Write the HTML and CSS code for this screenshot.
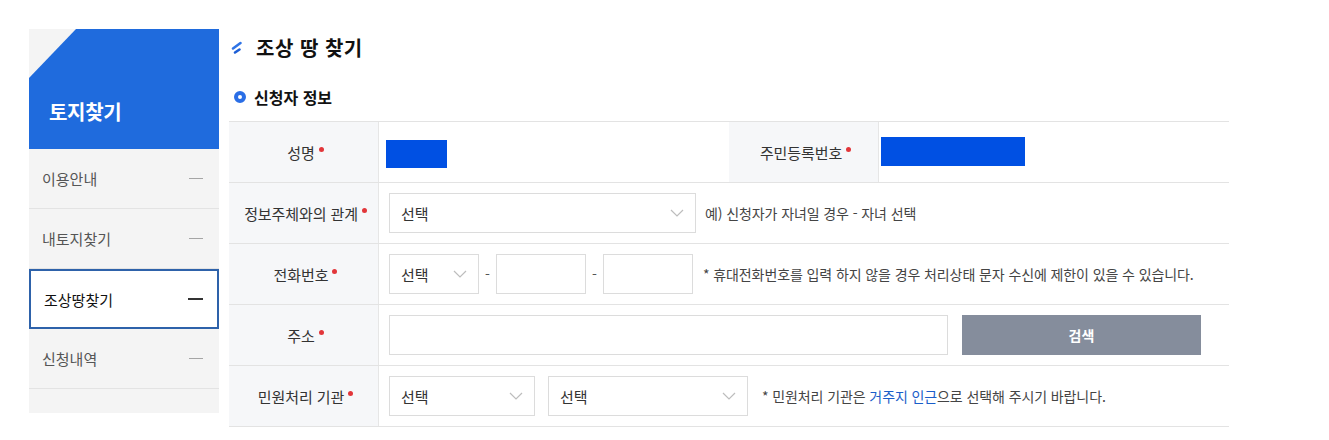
FILE: index.html
```html
<!DOCTYPE html>
<html lang="ko">
<head>
<meta charset="utf-8">
<title>조상 땅 찾기</title>
<link rel="stylesheet" href="styles.css">
</head>
<body>
<div class="page">
  <aside class="side">
    <div class="side-head">토지찾기</div>
    <ul class="side-menu">
      <li class="side-item"><span>이용안내</span><i class="dash"></i></li>
      <li class="side-item"><span>내토지찾기</span><i class="dash"></i></li>
      <li class="side-item active"><span>조상땅찾기</span><i class="dash"></i></li>
      <li class="side-item"><span>신청내역</span><i class="dash"></i></li>
    </ul>
  </aside>
  <main class="main">
    <h1 class="title">
      <svg class="title-icon" width="12" height="16" viewBox="0 0 12 16"><path d="M2 8.5 L9.5 3" stroke="#2f74e6" stroke-width="2.6" stroke-linecap="round"/><path d="M4 12.5 L8.5 9.5" stroke="#1d5fd6" stroke-width="2.6" stroke-linecap="round"/></svg>
      조상 땅 찾기
    </h1>
    <h2 class="subtitle"><span class="ring"></span>신청자 정보</h2>
    <div class="form">
      <div class="row row-split">
        <div class="label">성명<span class="req"></span></div>
        <div class="value"><span class="mask mask-name"></span></div>
        <div class="label">주민등록번호<span class="req"></span></div>
        <div class="value"><span class="mask mask-id"></span></div>
      </div>
      <div class="row">
        <div class="label">정보주체와의 관계<span class="req"></span></div>
        <div class="value">
          <div class="select w308"><span>선택</span><svg class="chev" width="14" height="8" viewBox="0 0 14 8"><path d="M1 1 L7 7 L13 1" fill="none" stroke="#bdbdbd" stroke-width="1.2"/></svg></div>
          <p class="note">예) 신청자가 자녀일 경우 - 자녀 선택</p>
        </div>
      </div>
      <div class="row">
        <div class="label">전화번호<span class="req"></span></div>
        <div class="value">
          <div class="select w90"><span>선택</span><svg class="chev" width="14" height="8" viewBox="0 0 14 8"><path d="M1 1 L7 7 L13 1" fill="none" stroke="#bdbdbd" stroke-width="1.2"/></svg></div>
          <span class="hyph">-</span>
          <div class="input w90"></div>
          <span class="hyph">-</span>
          <div class="input w90"></div>
          <p class="note">* 휴대전화번호를 입력 하지 않을 경우 처리상태 문자 수신에 제한이 있을 수 있습니다.</p>
        </div>
      </div>
      <div class="row">
        <div class="label">주소<span class="req"></span></div>
        <div class="value">
          <div class="input w560"></div>
          <button class="btn" type="button">검색</button>
        </div>
      </div>
      <div class="row">
        <div class="label">민원처리 기관<span class="req"></span></div>
        <div class="value">
          <div class="select w146"><span>선택</span><svg class="chev" width="14" height="8" viewBox="0 0 14 8"><path d="M1 1 L7 7 L13 1" fill="none" stroke="#bdbdbd" stroke-width="1.2"/></svg></div>
          <div class="select w200"><span>선택</span><svg class="chev" width="14" height="8" viewBox="0 0 14 8"><path d="M1 1 L7 7 L13 1" fill="none" stroke="#bdbdbd" stroke-width="1.2"/></svg></div>
          <p class="note note-wide">* 민원처리 기관은 <em class="hl">거주지 인근</em>으로 선택해 주시기 바랍니다.</p>
        </div>
      </div>
    </div>
  </main>
</div>
</body>
</html>
```

FILE: styles.css
```css
* { box-sizing: border-box; }
html, body { margin: 0; padding: 0; background: #fff; }
body {
  font-family: "Noto Sans CJK KR", "Noto Sans", sans-serif;
  color: #333;
  width: 1329px;
}
.page {
  display: flex;
  align-items: flex-start;
  gap: 10px;
  padding: 29px 0 0 29px;
}
.side {
  width: 190px;
  flex: none;
  background: #f4f4f4;
  padding-bottom: 24px;
}
.side-head {
  height: 120px;
  background: #1f6bdd;
  clip-path: polygon(47px 0, 100% 0, 100% 100%, 0 100%, 0 49px);
  color: #fff;
  font-size: 20px;
  font-weight: 700;
  letter-spacing: -0.3px;
  line-height: 30px;
  padding: 68px 0 0 20px;
}
.side-menu { list-style: none; margin: 0; padding: 0; }
.side-item {
  height: 60px;
  display: flex;
  align-items: center;
  justify-content: space-between;
  padding: 0 16px 0 13px;
  border-bottom: 1px solid #e3e3e3;
  font-size: 15px;
  letter-spacing: 0;
  color: #555;
}
.side-item .dash {
  display: block;
  width: 14px;
  height: 1.5px;
  background: #a5a5a5;
}
.side-item.active {
  background: #fff;
  border: 2px solid #2e62aa;
  padding: 0 14px 0 13px;
  color: #111;
}
.side-item.active .dash { background: #333; width: 15px; }

.main { width: 1000px; flex: none; }
.title {
  margin: 0;
  height: 36px;
  display: flex;
  align-items: center;
  font-size: 20px;
  font-weight: 700;
  letter-spacing: 0.5px;
  color: #111;
}
.title-icon { margin: 2px 13px 0 2px; }
.subtitle {
  margin: 20px 0 12px;
  height: 24px;
  display: flex;
  align-items: center;
  font-size: 16px;
  font-weight: 700;
  letter-spacing: 0;
  color: #111;
}
.ring {
  width: 12px;
  height: 12px;
  border-radius: 50%;
  border: 4px solid #2a6ee6;
  margin: 0 8px 0 5px;
}
.form { border-top: 1px solid #e3e3e3; }
.row {
  display: grid;
  grid-template-columns: 150px 1fr;
  height: 61px;
  border-bottom: 1px solid #e3e3e3;
}
.row-split { grid-template-columns: 150px 350px 150px 1fr; }
.label {
  background: #f6f7f9;
  border-right: 1px solid #e6e6e6;
  display: flex;
  align-items: center;
  justify-content: center;
  font-size: 15px;
  letter-spacing: -0.1px;
  color: #333;
  padding-left: 4px;
}
.req {
  display: inline-block;
  width: 5px;
  height: 5px;
  border-radius: 50%;
  background: #e2363a;
  align-self: flex-start;
  margin: 25px 0 0 4px;
}
.value {
  display: flex;
  align-items: center;
  padding-left: 10px;
}
.mask { display: block; background: #0050e3; }
.mask-name { width: 61px; height: 28px; margin: 3px 0 0 -3px; }
.mask-id { width: 144px; height: 29px; margin: -2px 0 0 -8px; }
.select, .input {
  height: 40px;
  border: 1px solid #dcdcdc;
  background: #fff;
  flex: none;
}
.select {
  display: flex;
  align-items: center;
  justify-content: space-between;
  padding: 0 11px 0 11px;
  font-size: 15px;
  letter-spacing: 0;
  color: #333;
}
.chev { display: block; }
.w308 { width: 307px; }
.w90 { width: 90px; }
.w560 { width: 559px; }
.w146 { width: 146px; }
.w200 { width: 200px; margin-left: 13px; }
.hyph {
  font-size: 14px;
  color: #555;
  width: 17px;
  text-align: center;
  flex: none;
}
.note {
  margin: 0 0 0 9px;
  font-size: 14px;
  letter-spacing: -0.1px;
  color: #444;
  white-space: nowrap;
}
.hyph + .input + .note { margin-left: 10px; }
.note-wide { margin-left: 14px; }
.hl { font-style: normal; color: #1a5dc9; }
.btn {
  width: 239px;
  height: 40px;
  margin-left: 14px;
  border: 0;
  background: #858d9c;
  color: #fff;
  font-family: inherit;
  font-size: 14px;
  font-weight: 700;
  letter-spacing: 0;
  padding: 0;
}
```
